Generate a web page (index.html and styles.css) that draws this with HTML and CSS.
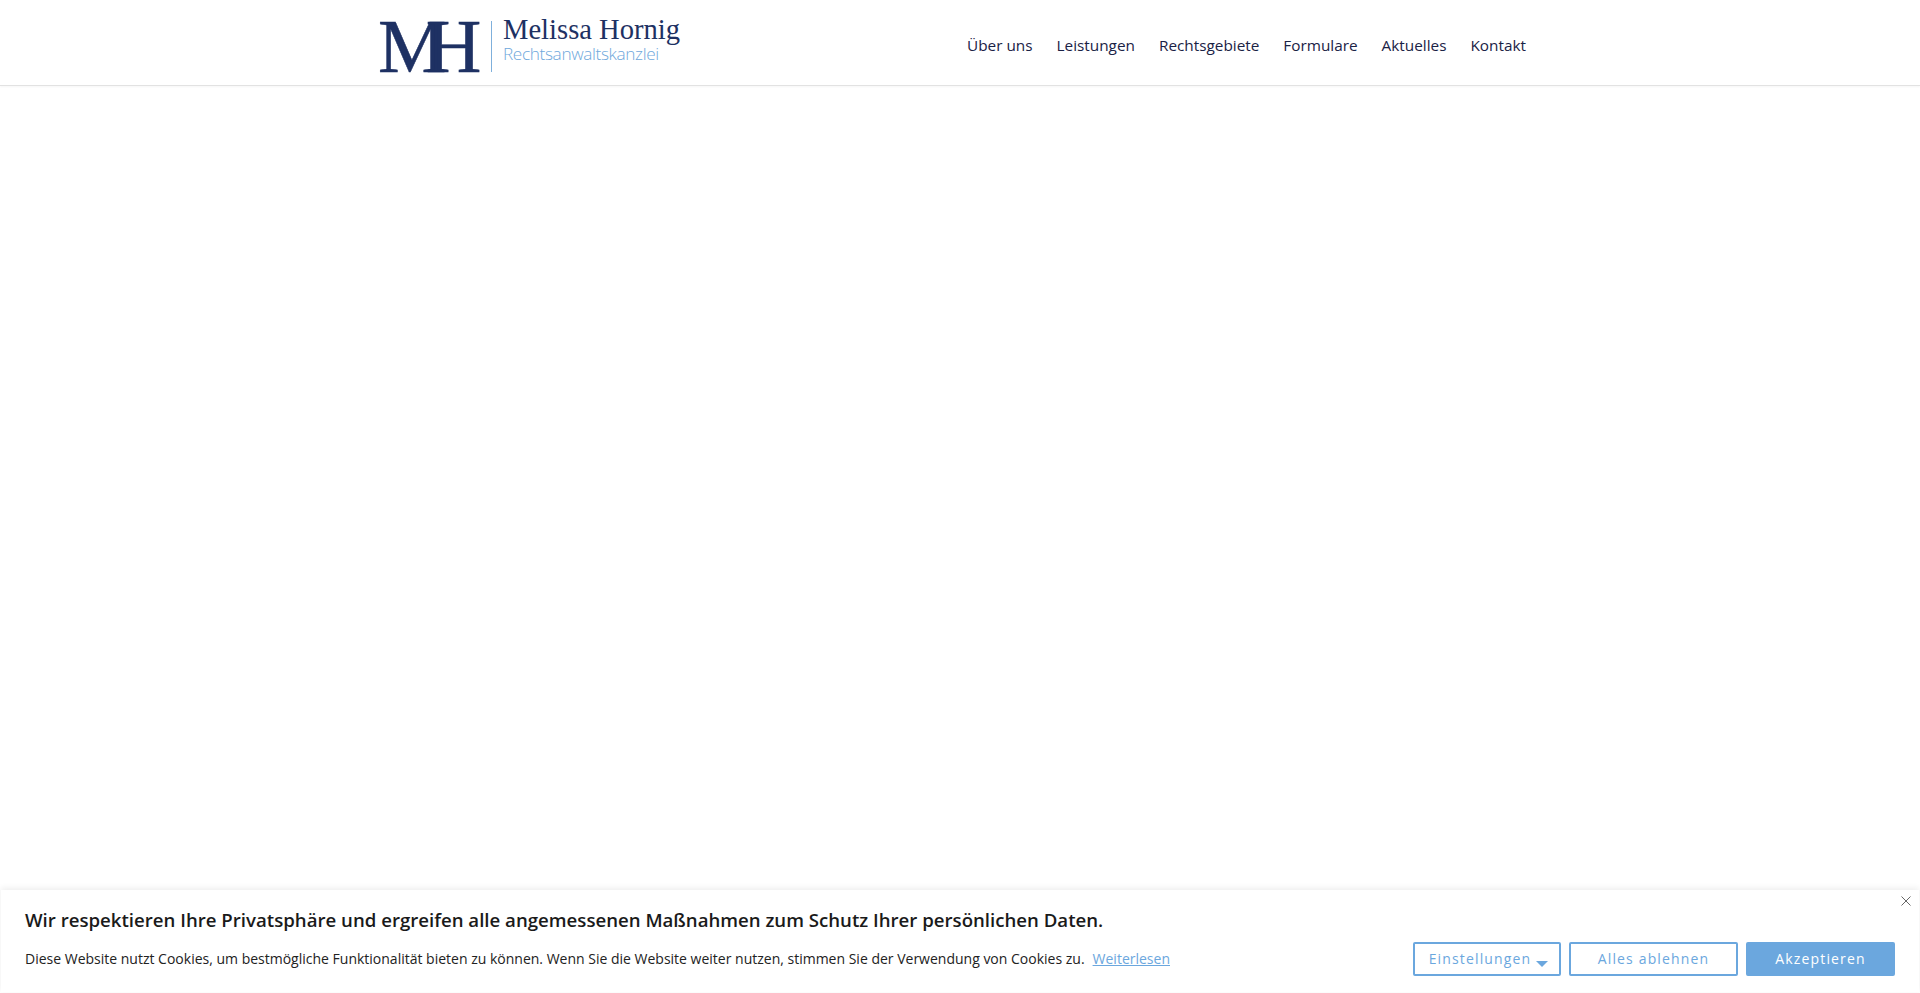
FILE: index.html
```html
<!DOCTYPE html>
<html lang="de">
<head>
<meta charset="utf-8">
<title>Melissa Hornig Rechtsanwaltskanzlei</title>
<link rel="stylesheet" href="styles.css">
</head>
<body>
<header class="site-header">
  <div class="header-inner">
    <a class="logo" href="#">
      <span class="logo-mark">MH</span>
      <span class="logo-rule"></span>
      <span class="logo-text">
        <span class="logo-name">Melissa Hornig</span>
        <span class="logo-sub">Rechtsanwaltskanzlei</span>
      </span>
    </a>
    <nav class="main-nav">
      <a href="#">Über uns</a>
      <a href="#">Leistungen</a>
      <a href="#">Rechtsgebiete</a>
      <a href="#">Formulare</a>
      <a href="#">Aktuelles</a>
      <a href="#">Kontakt</a>
    </nav>
  </div>
</header>
<main class="content"></main>
<aside class="cookie-bar">
  <button class="cookie-close" aria-label="Schließen">
    <svg class="close-icon" viewBox="0 0 10 10" width="10" height="10"><path d="M.5.5l9 9M9.5.5l-9 9"/></svg>
  </button>
  <h2 class="cookie-title">Wir respektieren Ihre Privatsphäre und ergreifen alle angemessenen Maßnahmen zum Schutz Ihrer persönlichen Daten.</h2>
  <div class="cookie-row">
    <p class="cookie-text">Diese Website nutzt Cookies, um bestmögliche Funktionalität bieten zu können. Wenn Sie die Website weiter nutzen, stimmen Sie der Verwendung von Cookies zu.<a class="cookie-more" href="#">Weiterlesen</a></p>
    <div class="cookie-actions">
      <button class="btn btn-settings">Einstellungen<span class="caret"></span></button>
      <button class="btn btn-reject">Alles ablehnen</button>
      <button class="btn btn-accept">Akzeptieren</button>
    </div>
  </div>
</aside>
</body>
</html>
```
FILE: styles.css
```css
* { box-sizing: border-box; }
html, body { margin: 0; height: 100%; }
body {
  display: flex;
  flex-direction: column;
  height: 993px;
  overflow: hidden;
  background: #fff;
  font-family: "Open Sans", sans-serif;
}
a { text-decoration: none; }

.site-header {
  height: 86px;
  flex: none;
  border-bottom: 1px solid #e2e2e2;
  box-shadow: 0 1px 2px rgba(0,0,0,.04);
}
.header-inner {
  display: flex;
  justify-content: space-between;
  height: 85px;
  padding: 0 394px 0 378px;
}
.logo { display: flex; align-items: flex-start; color: #1e3163; }
.logo-mark {
  width: 102px;
  margin-top: 4px;
  font-family: "Liberation Serif", serif;
  font-size: 77px;
  line-height: 84px;
  letter-spacing: -20.6px;
  -webkit-text-stroke: .5px #1e3163;
}
.logo-rule {
  width: 1px;
  height: 51px;
  margin: 21px 11px 0 11px;
  background: #7fb0dc;
}
.logo-text { display: flex; flex-direction: column; margin-top: 16px; }
.logo-name {
  height: 28px;
  font-family: "Liberation Serif", serif;
  font-size: 28.6px;
  line-height: 28px;
}
.logo-sub {
  font-size: 17.2px;
  line-height: 20px;
  font-weight: 300;
  color: #6fa8dc;
  letter-spacing: -.35px;
}
.main-nav { display: flex; gap: 24px; padding-top: 35px; }
.main-nav a { color: #1a2245; font-size: 15.33px; line-height: 21px; }

.content { flex: 1; }

.cookie-bar {
  position: relative;
  flex: none;
  height: 102px;
  margin: 0 1px 1px;
  padding: 17px 24px 0 24px;
  background: #fff;
  box-shadow: 0 -2px 6px rgba(0,0,0,.07);
}
.cookie-title {
  margin: 0;
  font-size: 18.64px;
  line-height: 25px;
  font-weight: 600;
  color: #1a1a1a;
}
.cookie-row {
  display: flex;
  justify-content: space-between;
  align-items: center;
  margin-top: 10px;
}
.cookie-text { margin: 0; font-size: 14px; line-height: 20px; color: #222; }
.cookie-more { margin-left: 8px; color: #6ba7de; text-decoration: underline; }
.cookie-actions { display: flex; gap: 8px; }
.btn {
  height: 34px;
  padding: 0;
  border: 2px solid #6ba7de;
  border-radius: 2px;
  background: #fff;
  color: #6ba7de;
  font: 14px/20px "Open Sans", sans-serif;
  letter-spacing: 1.15px;
}
.btn-settings { width: 148px; padding-left: 3px; }
.btn-reject { width: 169px; }
.btn-accept { width: 149px; background: #6ba7de; color: #fff; }
.caret {
  display: inline-block;
  margin-left: 5px;
  border: 6px solid transparent;
  border-top: 6px solid #6ba7de;
  border-bottom: 0;
  vertical-align: -3px;
}
.cookie-close {
  position: absolute;
  top: 6px;
  right: 8px;
  padding: 0;
  border: 0;
  background: none;
  line-height: 0;
}
.close-icon path { stroke: #666; fill: none; stroke-width: 1; }
```
